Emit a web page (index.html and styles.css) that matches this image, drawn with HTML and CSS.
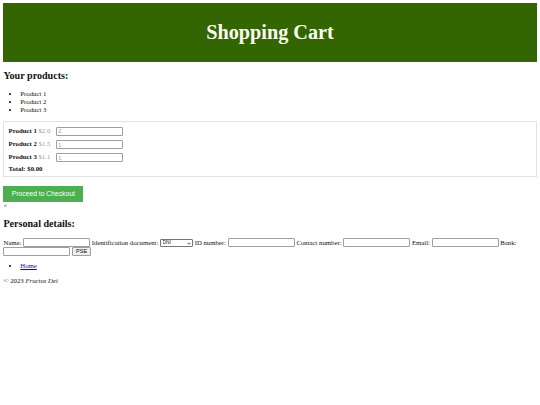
FILE: index.html
```html
<!DOCTYPE html>
<html lang="en">
<head>
<meta charset="utf-8">
<title>Shopping Cart</title>
<link rel="stylesheet" href="styles.css">
</head>
<body>
<header class="site-header">
  <h1 class="site-title">Shopping Cart</h1>
</header>
<main>
  <h2 class="section-title section-title--products">Your products:</h2>
  <ul class="list list--products">
    <li>Product 1</li>
    <li>Product 2</li>
    <li>Product 3</li>
  </ul>
  <div class="cart">
    <div class="cart-row"><strong>Product 1</strong> <span class="price">$2.0</span> <input class="field" type="number" placeholder="2"></div>
    <div class="cart-row"><strong>Product 2</strong> <span class="price">$1.5</span> <input class="field" type="number" placeholder="1"></div>
    <div class="cart-row"><strong>Product 3</strong> <span class="price">$1.1</span> <input class="field" type="number" placeholder="1"></div>
    <div class="cart-total"><strong>Total: $0.00</strong></div>
  </div>
  <button class="checkout-btn" type="button">Proceed to Checkout</button>
  <div class="close">&times;</div>
  <h2 class="section-title section-title--details">Personal details:</h2>
  <form class="details-form">
    <label>Name: <input class="field" type="text"></label>
    <label>Identification document: <span class="select-wrap"><select class="doc-select"><option>DNI</option><option>Passport</option></select><svg class="chevron" viewBox="0 0 8 5" width="4" height="3" aria-hidden="true"><path d="M1 1 L4 4 L7 1" fill="none" stroke="#222" stroke-width="1.6"/></svg></span></label>
    <label>ID number: <input class="field" type="text"></label>
    <label>Contact number: <input class="field" type="text"></label>
    <label>Email: <input class="field" type="text"></label>
    <label>Bank: <input class="field" type="text"></label>
    <button class="pse-btn" type="button">PSE</button>
  </form>
  <ul class="list list--nav">
    <li><a class="nav-link" href="#">Home</a></li>
  </ul>
</main>
<footer>
  <p class="copyright">&copy; 2023 <em>Fructus Dei</em></p>
</footer>
</body>
</html>
```

FILE: styles.css
```css
body {
  margin: 3.4px;
  font-family: "Liberation Serif", "Times New Roman", serif;
  font-size: 6.75px;
  line-height: 8px;
  color: #111;
  background: #fff;
}

.site-header {
  background: #336600;
  color: #fbfbf3;
  text-align: center;
  padding: 4.2px;
}

.site-title {
  font-size: 20.25px;
  line-height: 23px;
  margin: 13.6px 0;
  font-weight: bold;
}

.section-title {
  font-size: 10.1px;
  line-height: 12px;
  margin: 8.4px 0;
  font-weight: bold;
}

.section-title--products {
  margin-bottom: 7.4px;
}

.section-title--details {
  margin-top: 8.4px;
}

.list {
  margin: 6.75px 0;
  padding-left: 16.9px;
}

.list--products {
  margin-top: 0;
  margin-bottom: 7.2px;
}

.list--nav {
  margin-top: 5.5px;
  margin-bottom: 7.5px;
}

.cart {
  border: 1px solid #e2e2e2;
  padding: 4px 4.2px 3px;
  margin-bottom: 8.5px;
}

.cart-row {
  margin-bottom: 4.2px;
  height: 9px;
  line-height: 9px;
}

.cart-total {
  line-height: 8px;
}

.price {
  color: #9a9a9a;
  margin-right: 4.2px;
}

.field {
  box-sizing: border-box;
  width: 67px;
  height: 9px;
  padding: 0 1px;
  border: 1px solid #9e9e9e;
  border-radius: 1px;
  font-family: "Liberation Sans", Arial, sans-serif;
  font-size: 5.6px;
  vertical-align: middle;
  background: #fff;
  margin: 0;
  -moz-appearance: textfield;
}

.field::placeholder {
  color: #9a9a9a;
}

.field::-webkit-inner-spin-button,
.field::-webkit-outer-spin-button {
  -webkit-appearance: none;
  margin: 0;
}

.checkout-btn {
  display: block;
  background: #4caf50;
  color: #fff;
  border: none;
  padding: 4.2px 8.4px;
  font-family: "Liberation Sans", Arial, sans-serif;
  font-size: 6.75px;
  line-height: 7.6px;
  margin: 0;
}

.close {
  font-size: 6.75px;
  line-height: 7.6px;
}

.details-form {
  line-height: 9px;
}

.details-form .field,
.details-form .pse-btn,
.select-wrap {
  vertical-align: top;
}

.select-wrap {
  position: relative;
  display: inline-block;
  height: 9px;
}

.doc-select {
  -webkit-appearance: none;
  appearance: none;
  box-sizing: border-box;
  width: 33px;
  height: 8px;
  margin-top: 0.5px;
  padding: 0 0 0 1.5px;
  font-family: "Liberation Sans", Arial, sans-serif;
  font-size: 4.8px;
  line-height: 6px;
  color: #111;
  border: 1px solid #767676;
  border-radius: 1px;
  background: #fff;
  vertical-align: top;
  display: block;
}

.chevron {
  position: absolute;
  right: 2.5px;
  top: 3.2px;
  pointer-events: none;
}

.pse-btn {
  box-sizing: border-box;
  height: 9px;
  padding: 0 3px;
  font-family: "Liberation Sans", Arial, sans-serif;
  font-size: 5.6px;
  line-height: 7px;
  color: #111;
  border: 1px solid #9e9e9e;
  border-radius: 1px;
  background: #efefef;
  margin: 0;
}

.nav-link {
  color: #0000ee;
}

.copyright {
  margin: 0;
}
```
